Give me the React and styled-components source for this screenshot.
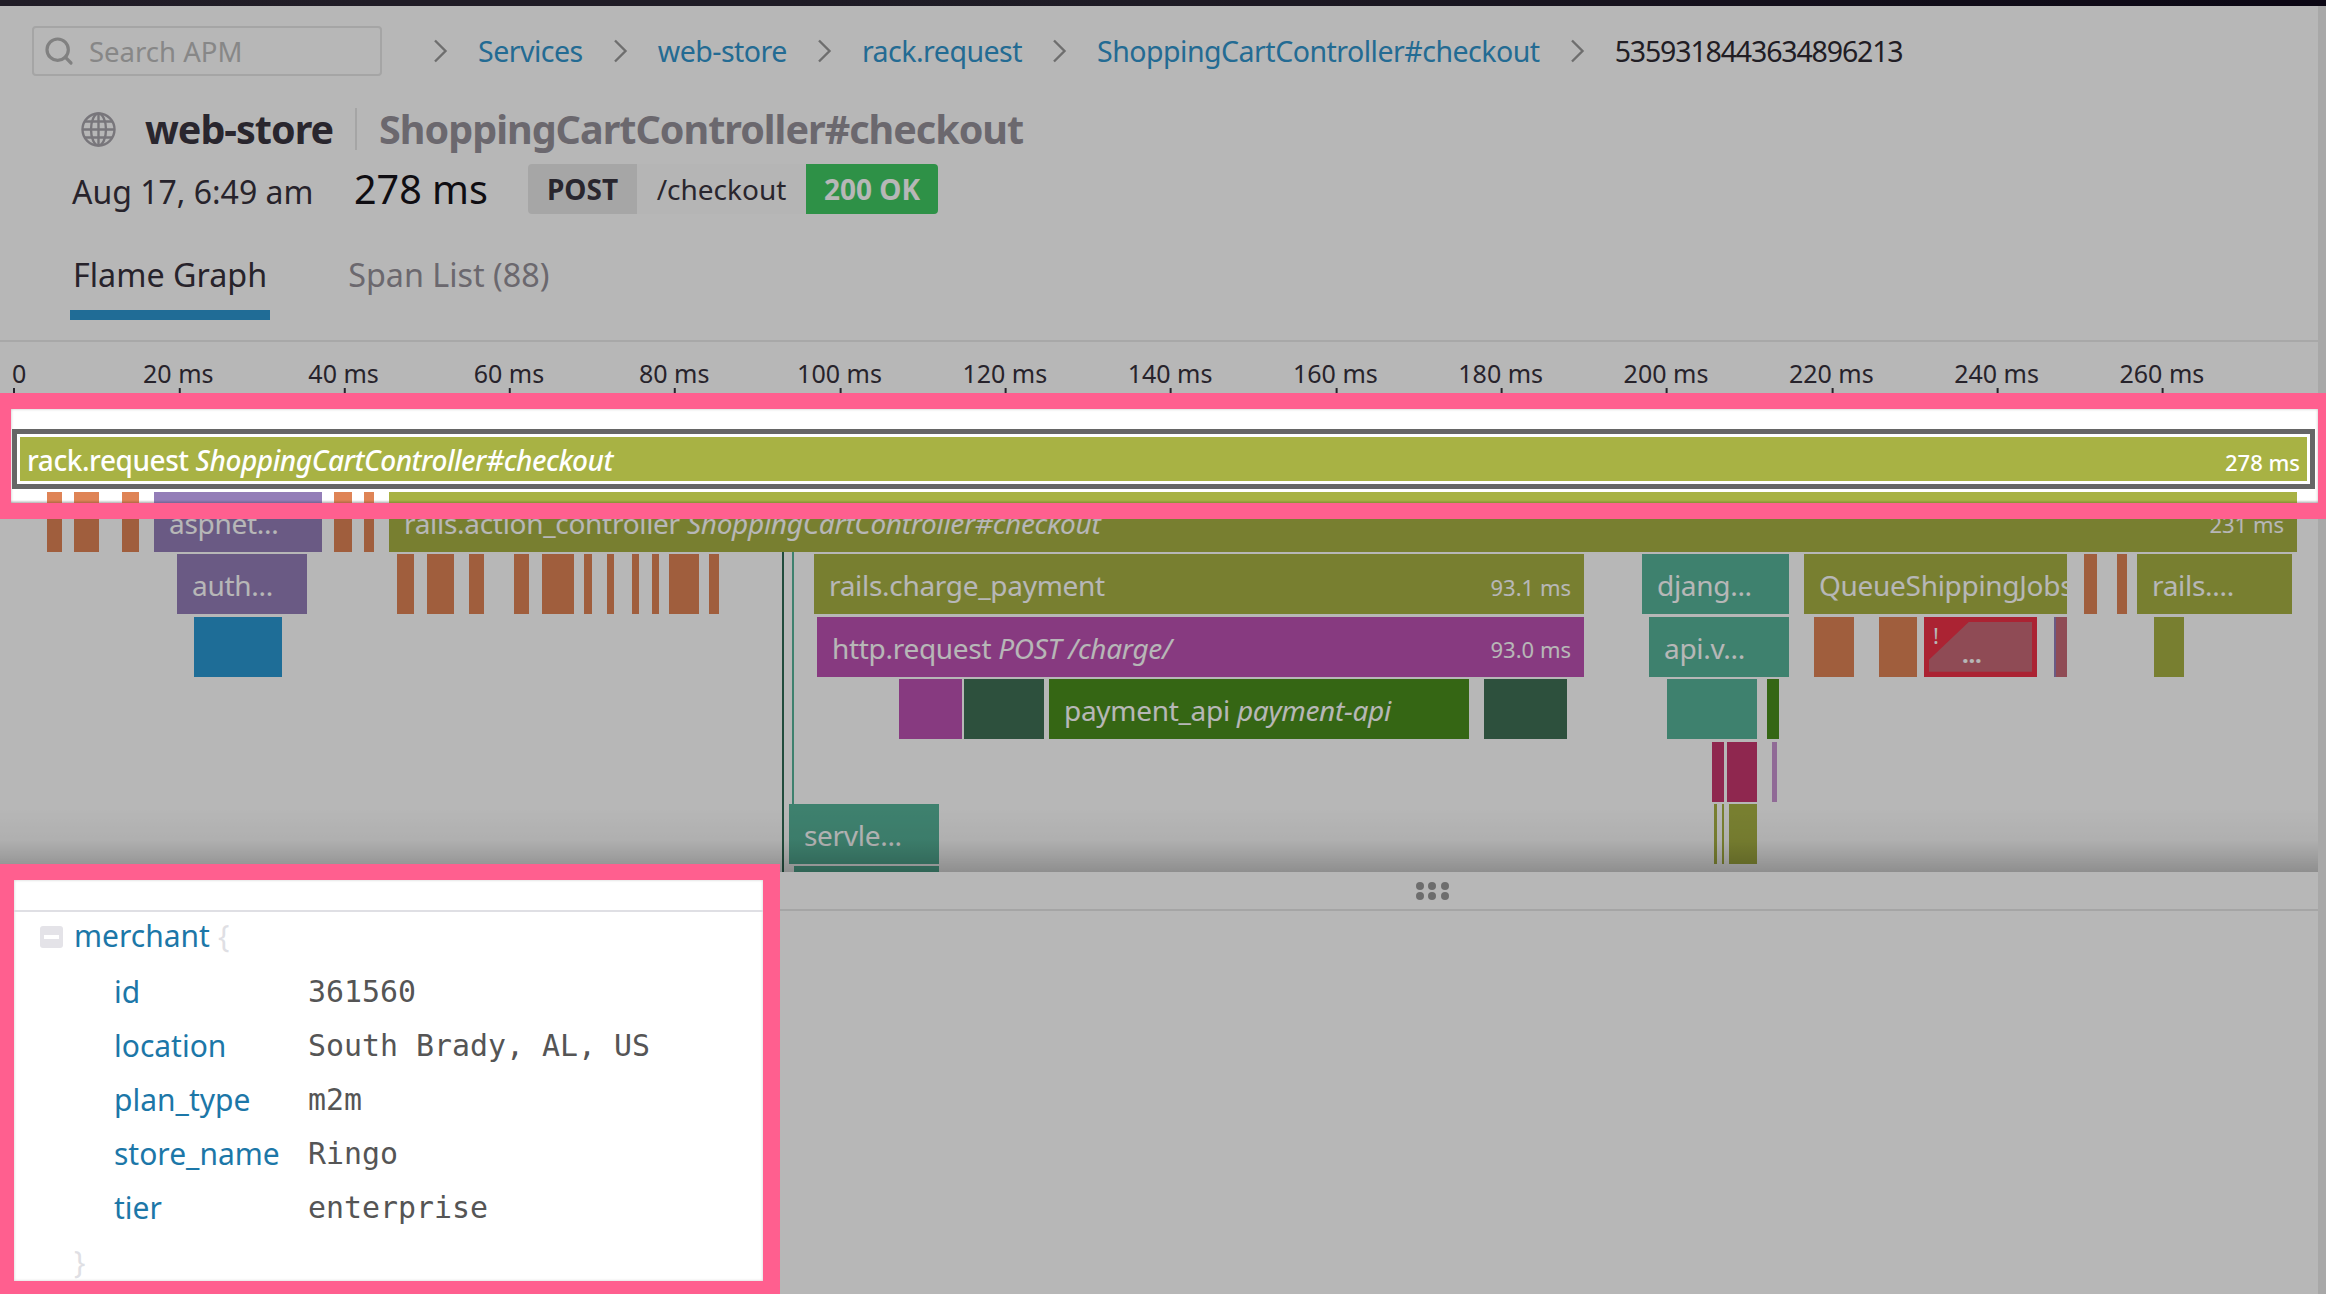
import React from 'react';
import styled, { createGlobalStyle } from 'styled-components';
import { Search } from 'lucide-react';

const GlobalStyle = createGlobalStyle`
  html, body {
    margin: 0;
    padding: 0;
    overflow: hidden;
    background: #fff;
    font-family: "Noto Sans", "Open Sans", sans-serif;
  }
  * { box-sizing: border-box; }
`;

const COLORS = {
  olive: '#a8b244',
  orange: '#df8456',
  purple: '#947eb8',
  teal: '#57b49a',
  blue: '#2b98d3',
  magenta: '#bc51b3',
  pine: '#3f7055',
  green: '#4b8e1d',
  crimson: '#c7376e',
  lilac: '#c994d1',
  red: '#ee3147',
  rose: '#c76977',
};

const span = (kind, start, end, name, service, ms) => ({ kind, start, end, name, service, ms });

const actionRow = [
  span('orange', 47, 62),
  span('orange', 74, 99),
  span('orange', 122, 139),
  span('purple', 154, 322, 'aspnet...'),
  span('orange', 334, 352),
  span('orange', 364, 374),
  span('olive', 389, 2297, 'rails.action_controller', 'ShoppingCartController#checkout', '231 ms'),
];

const rows = [
  actionRow,
  [
    span('purple', 177, 307, 'auth...'),
    span('orange', 397, 414),
    span('orange', 427, 454),
    span('orange', 469, 484),
    span('orange', 514, 529),
    span('orange', 542, 574),
    span('orange', 584, 592),
    span('orange', 607, 614),
    span('orange', 632, 639),
    span('orange', 652, 659),
    span('orange', 669, 699),
    span('orange', 709, 719),
    span('olive', 814, 1584, 'rails.charge_payment', null, '93.1 ms'),
    span('teal', 1642, 1789, 'djang...'),
    span('olive', 1804, 2067, 'QueueShippingJobs'),
    span('orange', 2084, 2097),
    span('orange', 2117, 2127),
    span('olive', 2137, 2292, 'rails....'),
  ],
  [
    span('blue', 194, 282),
    span('magenta', 817, 1584, 'http.request', 'POST /charge/', '93.0 ms'),
    span('teal', 1649, 1789, 'api.v...'),
    span('orange', 1814, 1854),
    span('orange', 1879, 1917),
    { ...span('red', 1924, 2037), error: true },
    span('purple', 2054, 2056),
    span('rose', 2056, 2067),
    span('olive', 2154, 2184),
  ],
  [
    span('magenta', 899, 962),
    span('pine', 964, 1044),
    span('green', 1049, 1469, 'payment_api', 'payment-api'),
    span('pine', 1484, 1567),
    span('teal', 1667, 1757),
    span('green', 1767, 1779),
  ],
  [
    span('crimson', 1712, 1724),
    span('crimson', 1727, 1757),
    span('lilac', 1772, 1777),
  ],
  [
    span('teal', 789, 939, 'servle...'),
    span('olive', 1714, 1717),
    span('olive', 1722, 1724),
    span('olive', 1729, 1757),
  ],
  [span('teal', 794, 939)],
];

const ticks = Array.from({ length: 14 }, (_, i) => i * 20);

const tags = [
  ['id', '361560'],
  ['location', 'South Brady, AL, US'],
  ['plan_type', 'm2m'],
  ['store_name', 'Ringo'],
  ['tier', 'enterprise'],
];

const Page = styled.div`
  position: relative;
  width: 2326px;
  height: 1294px;
  overflow: hidden;
  display: flex;
  flex-direction: column;
  background: #fff;
`;

const TopBar = styled.div`
  height: 6px;
  flex: none;
  background: linear-gradient(90deg, #2e2937, #2b2634 50%, #100a1c);
`;

const Body = styled.div`
  flex: 1;
  display: flex;
  min-height: 0;
`;

const Main = styled.main`
  flex: 1;
  min-width: 0;
  display: flex;
  flex-direction: column;
`;

const Scrollbar = styled.div`
  width: 8px;
  flex: none;
  background: #ebebeb;
`;

const Header = styled.header`
  height: 336px;
  flex: none;
  border-bottom: 2px solid #ebebeb;
  padding-top: 20px;
`;

const NavRow = styled.nav`
  display: flex;
  align-items: center;
  height: 50px;
  padding-left: 32px;
`;

const SearchBox = styled.div`
  width: 350px;
  height: 50px;
  margin-right: 51px;
  display: flex;
  align-items: center;
  gap: 14px;
  padding-left: 9px;
  border: 2px solid #e6e6e6;
  border-radius: 4px;
  color: #bcbcbc;
  font-size: 27.5px;
`;

const Crumbs = styled.div`
  display: flex;
  align-items: center;
  gap: 30px;
  font-size: 28.5px;
  letter-spacing: -0.5px;
`;

const CrumbLink = styled.a`
  color: #3295cd;
`;

const CrumbCurrent = styled.span`
  color: #2e2a33;
  letter-spacing: -1.15px;
`;

const TitleRow = styled.div`
  display: flex;
  align-items: center;
  height: 42px;
  margin-top: 32px;
  padding-left: 81px;
  font-size: 39.5px;
  font-weight: 700;
  letter-spacing: -1px;
`;

const ServiceName = styled.span`
  margin-left: 29px;
  color: #3a3540;
`;

const TitleDivider = styled.span`
  width: 2px;
  height: 42px;
  margin: 0 22px;
  background: #e6e6e6;
`;

const ResourceName = styled.span`
  color: #95919a;
`;

const MetaRow = styled.div`
  display: flex;
  align-items: center;
  height: 50px;
  margin-top: 14px;
  padding-left: 72px;
`;

const DateText = styled.span`
  width: 282px;
  padding-top: 4px;
  font-size: 32px;
  color: #37323d;
`;

const Duration = styled.span`
  width: 174px;
  font-size: 39.5px;
  color: #16131a;
`;

const RequestBadge = styled.div`
  display: flex;
  height: 50px;
  border-radius: 4px;
  overflow: hidden;
  font-size: 28px;
`;

const Method = styled.span`
  width: 109px;
  display: flex;
  align-items: center;
  justify-content: center;
  font-weight: 700;
  background: #e8e8e8;
  color: #3a3540;
`;

const RequestPath = styled.span`
  width: 169px;
  display: flex;
  align-items: center;
  justify-content: center;
  background: #fcfcfc;
  color: #3a3540;
`;

const Status = styled.span`
  width: 132px;
  display: flex;
  align-items: center;
  justify-content: center;
  font-weight: 700;
  background: #41ca64;
  color: #fff;
`;

const Tabs = styled.div`
  display: flex;
  height: 70px;
  margin-top: 36px;
  padding-left: 70px;
  gap: 75px;
`;

const Tab = styled.div`
  height: 70px;
  padding: 0 3px;
  font-size: 32.3px;
  line-height: 48px;
  color: ${(p) => (p.$active ? '#37323d' : '#95919a')};
  border-bottom: 10px solid ${(p) => (p.$active ? '#2d97d1' : 'transparent')};
`;

const Ruler = styled.div`
  position: relative;
  height: 51px;
  flex: none;
  color: #37323d;
  font-size: 25px;
`;

const Tick = styled.div`
  position: absolute;
  top: 18px;
  bottom: 0;
  transform: translateX(${(p) => (p.$first ? '-1px' : '-50%')});
  line-height: 26px;
  white-space: nowrap;
  &::after {
    content: '';
    position: absolute;
    bottom: 0;
    left: ${(p) => (p.$first ? '1px' : '50%')};
    width: 2px;
    height: 5px;
    background: #37323d;
  }
`;

const FlameCanvas = styled.section`
  position: relative;
  height: 479px;
  flex: none;
  overflow: hidden;
  display: grid;
  grid-auto-rows: 60px;
  row-gap: 2.4px;
  padding-top: 36.6px;
  &::after {
    content: '';
    position: absolute;
    left: 0;
    right: 0;
    bottom: 0;
    height: 64px;
    background: linear-gradient(rgba(0, 0, 0, 0), rgba(0, 0, 0, 0.04) 50%, rgba(0, 0, 0, 0.22));
  }
`;

const FlameRow = styled.div`
  position: relative;
`;

const SpanBar = styled.div`
  position: absolute;
  top: 0;
  bottom: 0;
  display: flex;
  align-items: center;
  padding: 2px ${(p) => (p.$label ? '13px' : '0')} 0 ${(p) => (p.$label ? '15px' : '0')};
  overflow: hidden;
  white-space: nowrap;
  background: ${(p) => COLORS[p.$kind]};
  color: #fff;
  font-size: 28px;
  letter-spacing: -0.3px;
`;

const SpanName = styled.span`
  flex: none;
`;

const SpanService = styled.em`
  flex: none;
  margin-left: 7px;
`;

const SpanTime = styled.span`
  flex: none;
  margin-left: auto;
  padding-top: 3px;
  font-size: 22px;
  letter-spacing: 0;
`;

const ErrorFill = styled.div`
  position: absolute;
  inset: 5px;
  background: ${COLORS.rose};
  clip-path: polygon(40px 0, 100% 0, 100% 100%, 0 100%, 0 38px);
`;

const ErrorMark = styled.span`
  position: absolute;
  left: 9px;
  top: 4px;
  font-size: 22px;
  line-height: 28px;
`;

const ErrorDots = styled.span`
  position: absolute;
  left: 38px;
  top: 22px;
  font-size: 24px;
  font-weight: 700;
  line-height: 30px;
`;

const TraceLine = styled.div`
  position: absolute;
  top: 159px;
  left: ${(p) => p.$left}px;
  width: 2px;
  height: ${(p) => p.$height}px;
  background: ${(p) => p.$color};
`;

const Divider = styled.div`
  height: 39px;
  flex: none;
  border-bottom: 2px solid #e6e6e6;
  display: flex;
  justify-content: center;
  padding: 10px 0 0 546px;
`;

const Handle = styled.div`
  width: 33px;
  height: 18px;
  display: grid;
  grid-template-columns: repeat(3, 8px);
  grid-template-rows: repeat(2, 8px);
  justify-content: space-between;
  align-content: space-between;
`;

const HandleDot = styled.i`
  border-radius: 50%;
  background: #999;
`;

const Overlay = styled.div`
  position: absolute;
  inset: 0;
  z-index: 10;
  background: rgba(0, 0, 0, 0.283);
`;

const TraceFocus = styled.div`
  position: absolute;
  z-index: 11;
  top: 393px;
  left: 0;
  right: 0;
  height: 126px;
  padding: 16px 8px 16px 11px;
  background: #ff5f8f;
`;

const TracePanel = styled.div`
  position: relative;
  height: 94px;
  overflow: hidden;
  background: #fff;
  padding-top: 20px;
  box-shadow: inset 0 0 3px rgba(0, 0, 0, 0.25);
`;

const RootOutline = styled.div`
  width: 2303px;
  height: 60px;
  margin-left: 1px;
  border: 5px solid #666;
  background: #fff;
`;

const RootInner = styled.div`
  height: 100%;
  border: 3px solid #fff;
`;

const RootBar = styled.div`
  height: 100%;
  display: flex;
  align-items: center;
  padding: 2px 7px 0 7px;
  background: ${COLORS.olive};
  color: #fff;
  font-size: 28px;
  font-weight: 500;
  letter-spacing: -0.45px;
`;

const ClippedRow = styled.div`
  position: relative;
  height: 11px;
  margin-top: 3px;
  overflow: hidden;
  &::after {
    content: '';
    position: absolute;
    left: 0;
    right: 0;
    bottom: 0;
    height: 3px;
    background: linear-gradient(rgba(0, 0, 0, 0), rgba(0, 0, 0, 0.2));
  }
`;

const TagsFocus = styled.div`
  position: absolute;
  z-index: 11;
  top: 864px;
  left: 0;
  width: 780px;
  height: 430px;
  padding: 16px 17px 13px 14px;
  background: #ff5f8f;
`;

const TagsPanel = styled.div`
  height: 100%;
  overflow: hidden;
  background: #fff;
  box-shadow: inset 0 0 3px rgba(0, 0, 0, 0.2);
`;

const TagsHead = styled.div`
  height: 32px;
  border-bottom: 2px solid #dfdfe4;
`;

const TagRow = styled.div`
  display: flex;
  align-items: center;
  height: 54px;
  padding-left: ${(p) => (p.$nested ? '100px' : '26px')};
`;

const GroupRow = styled(TagRow)`
  height: 52px;
  padding-bottom: 5px;
`;

const Toggle = styled.span`
  position: relative;
  width: 23px;
  height: 22px;
  margin-right: 11px;
  margin-top: 3px;
  border-radius: 3px;
  background: #e4e3e8;
  &::after {
    content: '';
    position: absolute;
    left: 4px;
    right: 4px;
    top: 9px;
    height: 4px;
    background: #fff;
  }
`;

const TagKey = styled.span`
  width: ${(p) => (p.$nested ? '194px' : 'auto')};
  flex: none;
  color: #1c77a8;
  font-size: 30px;
`;

const TagValue = styled.span`
  color: #555;
  font-family: "DejaVu Sans Mono", monospace;
  font-size: 29.9px;
`;

const Brace = styled.span`
  margin-left: ${(p) => (p.$open ? '8px' : '34px')};
  color: #dfdfe4;
  font-size: 30px;
`;

const Chevron = () => (
  <svg width="15" height="24" viewBox="0 0 15 24" fill="none" stroke="#9a9a9a" strokeWidth="2.4">
    <path d="M2 1.5 L12.5 12 L2 22.5" />
  </svg>
);

const Globe = () => (
  <svg width="35" height="35" viewBox="0 0 35 35" fill="none" stroke="#a8a5ac" strokeWidth="2.4">
    <circle cx="17.5" cy="17.5" r="16" />
    <ellipse cx="17.5" cy="17.5" rx="7.5" ry="16" />
    <path d="M17.5 1.5 V33.5 M1.5 17.5 H33.5 M4 9.5 H31 M4 25.5 H31" />
  </svg>
);

const FlameSpan = ({ item, offset = 0 }) => (
  <SpanBar
    $kind={item.kind}
    $label={Boolean(item.name)}
    style={{ left: item.start - offset, width: item.end - item.start }}
  >
    {item.name && <SpanName>{item.name}</SpanName>}
    {item.service && <SpanService>{item.service}</SpanService>}
    {item.ms && <SpanTime>{item.ms}</SpanTime>}
    {item.error && (
      <>
        <ErrorFill />
        <ErrorMark>!</ErrorMark>
        <ErrorDots>...</ErrorDots>
      </>
    )}
  </SpanBar>
);

const App = () => {
  return (
    <Page>
      <GlobalStyle />
      <TopBar />
      <Body>
        <Main>
          <Header>
            <NavRow>
              <SearchBox>
                <Search size={32} color="#b4b4b4" strokeWidth={2.4} />
                Search APM
              </SearchBox>
              <Crumbs>
                <Chevron />
                <CrumbLink>Services</CrumbLink>
                <Chevron />
                <CrumbLink>web-store</CrumbLink>
                <Chevron />
                <CrumbLink>rack.request</CrumbLink>
                <Chevron />
                <CrumbLink>ShoppingCartController#checkout</CrumbLink>
                <Chevron />
                <CrumbCurrent>5359318443634896213</CrumbCurrent>
              </Crumbs>
            </NavRow>
            <TitleRow>
              <Globe />
              <ServiceName>web-store</ServiceName>
              <TitleDivider />
              <ResourceName>ShoppingCartController#checkout</ResourceName>
            </TitleRow>
            <MetaRow>
              <DateText>Aug 17, 6:49 am</DateText>
              <Duration>278 ms</Duration>
              <RequestBadge>
                <Method>POST</Method>
                <RequestPath>/checkout</RequestPath>
                <Status>200 OK</Status>
              </RequestBadge>
            </MetaRow>
            <Tabs>
              <Tab $active>Flame Graph</Tab>
              <Tab>Span List (88)</Tab>
            </Tabs>
          </Header>

          <Ruler>
            {ticks.map((t) => (
              <Tick key={t} $first={t === 0} style={{ left: 13 + (t / 20) * 165.3 }}>
                {t === 0 ? '0' : `${t} ms`}
              </Tick>
            ))}
          </Ruler>

          <FlameCanvas>
            <FlameRow />
            {rows.map((row, i) => (
              <FlameRow key={i}>
                {row.map((item) => (
                  <FlameSpan key={`${item.kind}-${item.start}`} item={item} />
                ))}
              </FlameRow>
            ))}
            <TraceLine $left={782} $height={320} $color="#2f6b55" />
            <TraceLine $left={792} $height={252} $color="#57b49a" />
          </FlameCanvas>

          <Divider>
            <Handle>
              {[0, 1, 2, 3, 4, 5].map((d) => (
                <HandleDot key={d} />
              ))}
            </Handle>
          </Divider>
        </Main>
        <Scrollbar />
      </Body>

      <Overlay />

      <TraceFocus>
        <TracePanel>
          <RootOutline>
            <RootInner>
              <RootBar>
                <SpanName>rack.request</SpanName>
                <SpanService>ShoppingCartController#checkout</SpanService>
                <SpanTime>278 ms</SpanTime>
              </RootBar>
            </RootInner>
          </RootOutline>
          <ClippedRow>
            {actionRow.map((item) => (
              <FlameSpan key={item.start} item={{ ...item, name: null, service: null, ms: null }} offset={11} />
            ))}
          </ClippedRow>
        </TracePanel>
      </TraceFocus>

      <TagsFocus>
        <TagsPanel>
          <TagsHead />
          <GroupRow>
            <Toggle />
            <TagKey>merchant</TagKey>
            <Brace $open>{'{'}</Brace>
          </GroupRow>
          {tags.map(([key, value]) => (
            <TagRow key={key} $nested>
              <TagKey $nested>{key}</TagKey>
              <TagValue>{value}</TagValue>
            </TagRow>
          ))}
          <TagRow>
            <Brace>{'}'}</Brace>
          </TagRow>
        </TagsPanel>
      </TagsFocus>
    </Page>
  );
};

export default App;
